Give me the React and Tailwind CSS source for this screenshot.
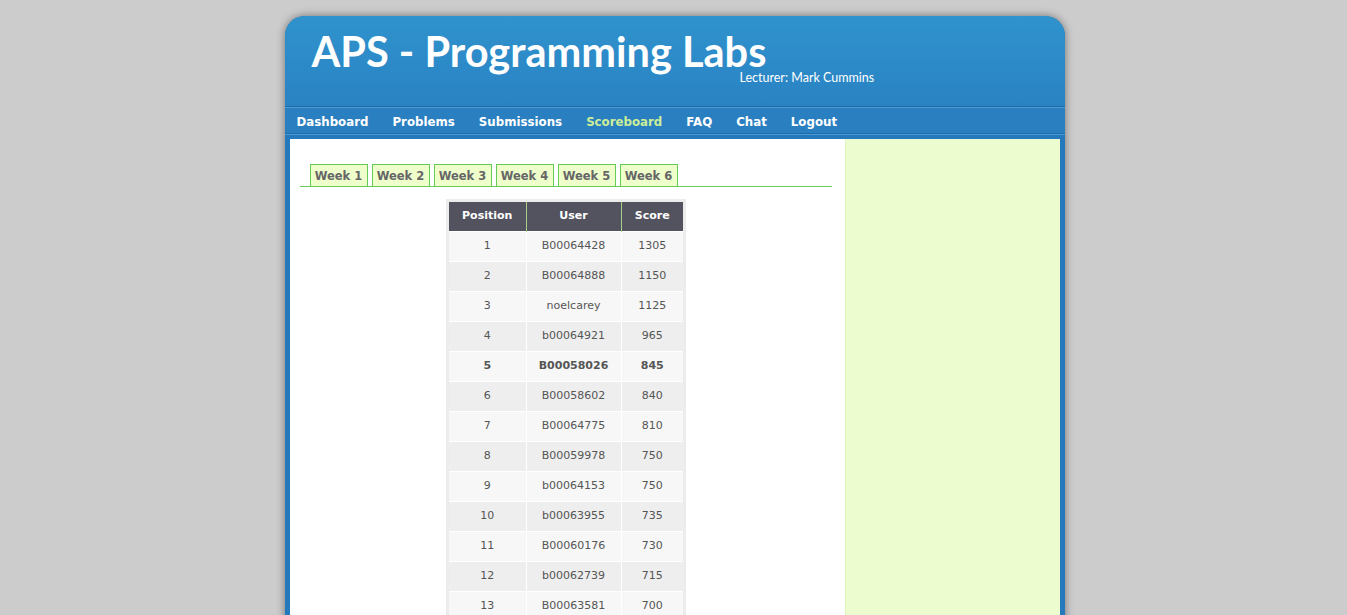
import React from 'react';

const navItems = ['Dashboard', 'Problems', 'Submissions', 'Scoreboard', 'FAQ', 'Chat', 'Logout'];
const weeks = ['Week 1', 'Week 2', 'Week 3', 'Week 4', 'Week 5', 'Week 6'];

const rows = [
  [1, 'B00064428', 1305],
  [2, 'B00064888', 1150],
  [3, 'noelcarey', 1125],
  [4, 'b00064921', 965],
  [5, 'B00058026', 845],
  [6, 'B00058602', 840],
  [7, 'B00064775', 810],
  [8, 'B00059978', 750],
  [9, 'b00064153', 750],
  [10, 'b00063955', 735],
  [11, 'B00060176', 730],
  [12, 'b00062739', 715],
  [13, 'B00063581', 700]
];

const App = () => {
  return (
    <div className="min-h-screen bg-[#cccccc] pt-4 pl-[2px] font-['DejaVu_Sans',sans-serif]">
      <div className="mx-auto w-[780px] rounded-t-[20px] bg-[#2479bd] shadow-[0_0_8px_rgba(0,0,0,0.45)]">
        {/* header */}
        <div className="h-[90px] rounded-t-[20px] bg-gradient-to-b from-[#2f93cd] to-[#2a82c3] pl-[27px] pt-[10px] text-white">
          <h1 className="text-[41.5px] font-bold leading-[50px] font-['Lato',sans-serif]">APS - Programming Labs</h1>
          <div className="ml-[428px] -mt-[5px] text-[12.5px] leading-[14px] font-['Lato',sans-serif]">Lecturer: Mark Cummins</div>
        </div>

        {/* nav */}
        <div className="border-t border-t-[#1f6ca8]">
          <div className="flex h-[26px] items-center border-t border-t-[#4a9ad6] bg-[#2a7fc0] pt-[4px]">
            {navItems.map((item) => (
              <a
                key={item}
                className={`px-3 text-[11.8px] font-bold ${item === 'Scoreboard' ? 'text-[#ccee99]' : 'text-white'}`}
              >
                {item}
              </a>
            ))}
          </div>
          <div className="h-px bg-[#1f6ca8]" />
          <div className="h-px bg-[#4a9ad6]" />
        </div>

        {/* content */}
        <div className="flex px-[5px] pt-[4px]">
          <div className="w-[555px] bg-white pt-[25px] pb-10">
            <div className="mx-[10px] mr-[13px] flex gap-[4px] border-b border-b-[#66cc55] pl-[10px]">
              {weeks.map((w) => (
                <div
                  key={w}
                  className="-mb-px flex h-[23px] w-[58px] items-center justify-center border border-[#66cc55] bg-[#eeffcc] pt-[2px] text-[11.5px] font-bold text-[#666]"
                >
                  {w}
                </div>
              ))}
            </div>

            <div className="mt-[12px] flex justify-center pr-[2px]">
              <div className="border-[3px] border-[#ececec]">
                <table className="border-collapse text-[11px] text-[#555]">
                  <thead>
                    <tr className="h-[29px] bg-[#53535f] text-white">
                      <th className="w-[77px] border-r border-r-[#a8d08a] font-bold">Position</th>
                      <th className="w-[95px] border-r border-r-[#a8d08a] font-bold">User</th>
                      <th className="w-[62px] font-bold">Score</th>
                    </tr>
                  </thead>
                  <tbody>
                    {rows.map(([pos, user, score], i) => (
                      <tr
                        key={pos}
                        className={`h-[30px] text-center ${i % 2 === 0 ? 'bg-[#f7f7f7]' : 'bg-[#eeeeee]'} ${pos === 5 ? 'font-bold' : ''}`}
                      >
                        <td className="border-t border-r border-white">{pos}</td>
                        <td className="border-t border-r border-white">{user}</td>
                        <td className="border-t border-white">{score}</td>
                      </tr>
                    ))}
                  </tbody>
                </table>
              </div>
            </div>
          </div>
          <div className="w-[215px] border-l border-l-[#e0f5c0] bg-[#ecfccf]" />
        </div>
      </div>
    </div>
  );
};

export default App;
